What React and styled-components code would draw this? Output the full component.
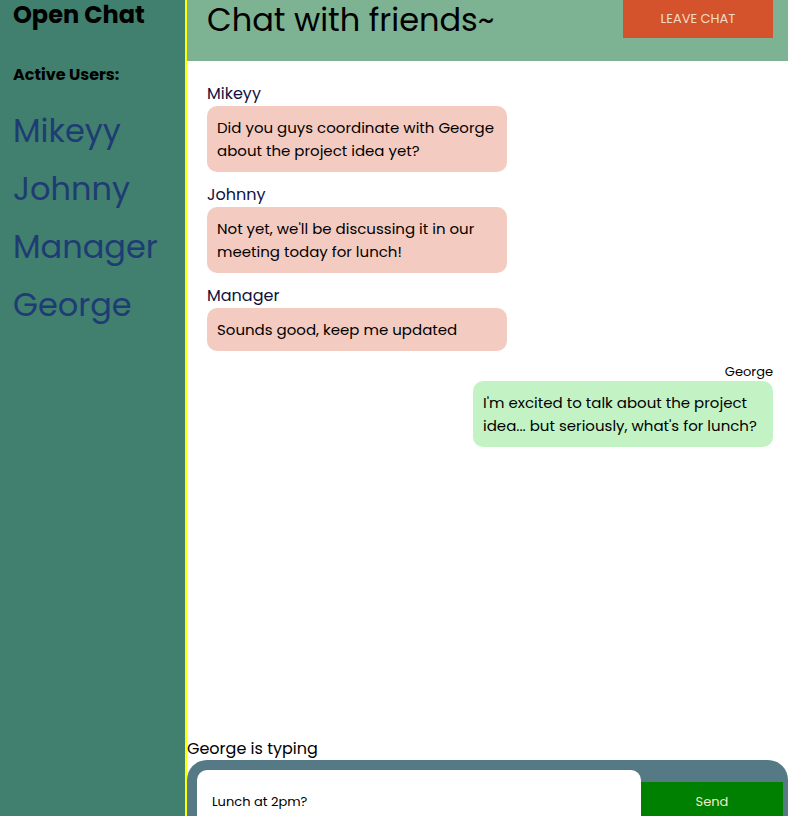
import React from 'react'
import styled, { createGlobalStyle } from 'styled-components';

const GlobalStyle = createGlobalStyle`
  html, body {
    margin: 0;
    padding: 0;
    height: 100%;
    overflow: hidden;
  }
  body {
    font-family: "Poppins", "Open Sans", "Noto Sans", sans-serif;
  }
  * {
    box-sizing: border-box;
  }
`;

const Page = styled.div`
  display: flex;
  width: 100%;
  height: 100vh;
`;

const Sidebar = styled.aside`
  width: 187px;
  flex-shrink: 0;
  background-color: #417f6e;
  border-right: 2px solid #ffff00;
  padding: 0 0 0 13px;
  h1{
    margin: 0;
    font-size: 24px;
    line-height: 30px;
    font-weight: 700;
    color: #000;
  }
  h3{
    margin: 32px 0 15px;
    font-size: 16px;
    font-weight: 700;
    color: #000;
  }
`;

const UserList = styled.ul`
  list-style: none;
  margin: 0;
  padding: 0;
  li{
    font-size: 32px;
    line-height: 58px;
    color: #1e3c73;
  }
`;

const Main = styled.main`
  flex: 1;
  display: flex;
  flex-direction: column;
  min-width: 0;
`;

const Header = styled.header`
  height: 61px;
  flex-shrink: 0;
  background-color: #7db292;
  display: flex;
  justify-content: space-between;
  align-items: flex-start;
  padding: 0 15px 0 20px;
  h2{
    margin: 0;
    font-size: 32px;
    font-weight: 400;
    line-height: 40px;
    color: #000;
  }
`;

const LeaveButton = styled.button`
  width: 150px;
  height: 38px;
  border: none;
  background-color: #d4522c;
  color: #f3dcc6;
  font-family: inherit;
  font-size: 13px;
  text-transform: uppercase;
`;

const Messages = styled.div`
  flex: 1;
  display: flex;
  flex-direction: column;
  padding: 21px 15px 0 20px;
  overflow: hidden;
`;

const Message = styled.div`
  display: flex;
  flex-direction: column;
  align-items: ${p => p.$own ? 'flex-end' : 'flex-start'};
  margin-bottom: 11px;
`;

const Author = styled.span`
  font-size: ${p => p.$own ? '13px' : '16px'};
  line-height: ${p => p.$own ? '19px' : '24px'};
  color: ${p => p.$own ? '#000' : '#101040'};
`;

const Bubble = styled.div`
  width: 300px;
  padding: 10px 10px;
  border-radius: 10px;
  font-size: 15px;
  line-height: 23px;
  color: #000;
  background-color: ${p => p.$own ? '#c3f3c5' : '#f4cbc0'};
`;

const Typing = styled.div`
  font-size: 16px;
  line-height: 23px;
  color: #000;
`;

const InputBar = styled.form`
  height: 56px;
  flex-shrink: 0;
  display: flex;
  align-items: flex-start;
  padding: 10px 5px 0 10px;
  background-color: #557a86;
  border-radius: 20px 20px 0 0;
`;

const TextInput = styled.input`
  width: 444px;
  height: 50px;
  border: none;
  border-radius: 10px 10px 0 0;
  padding: 14px 15px 0;
  font-family: inherit;
  font-size: 13px;
  color: #000;
  outline: none;
`;

const SendButton = styled.button`
  flex: 1;
  height: 40px;
  margin-top: 12px;
  border: none;
  background-color: #008000;
  color: #f1ecc3;
  font-family: inherit;
  font-size: 13px;
`;

const users = ['Mikeyy', 'Johnny', 'Manager', 'George'];

const messages = [
  { author: 'Mikeyy', text: 'Did you guys coordinate with George about the project idea yet?' },
  { author: 'Johnny', text: "Not yet, we'll be discussing it in our meeting today for lunch!" },
  { author: 'Manager', text: 'Sounds good, keep me updated' },
  { author: 'George', text: "I'm excited to talk about the project idea... but seriously, what's for lunch?", own: true },
];

const App = () => {
  return (
    <Page>
      <GlobalStyle />
      <Sidebar>
        <h1>Open Chat</h1>
        <h3>Active Users:</h3>
        <UserList>
          {users.map(u => <li key={u}>{u}</li>)}
        </UserList>
      </Sidebar>
      <Main>
        <Header>
          <h2>Chat with friends~</h2>
          <LeaveButton>Leave chat</LeaveButton>
        </Header>
        <Messages>
          {messages.map((m, i) => (
            <Message key={i} $own={m.own}>
              <Author $own={m.own}>{m.author}</Author>
              <Bubble $own={m.own}>{m.text}</Bubble>
            </Message>
          ))}
        </Messages>
        <Typing>George is typing</Typing>
        <InputBar onSubmit={e => e.preventDefault()}>
          <TextInput defaultValue="Lunch at 2pm?" />
          <SendButton type="submit">Send</SendButton>
        </InputBar>
      </Main>
    </Page>
  )
}

export default App
